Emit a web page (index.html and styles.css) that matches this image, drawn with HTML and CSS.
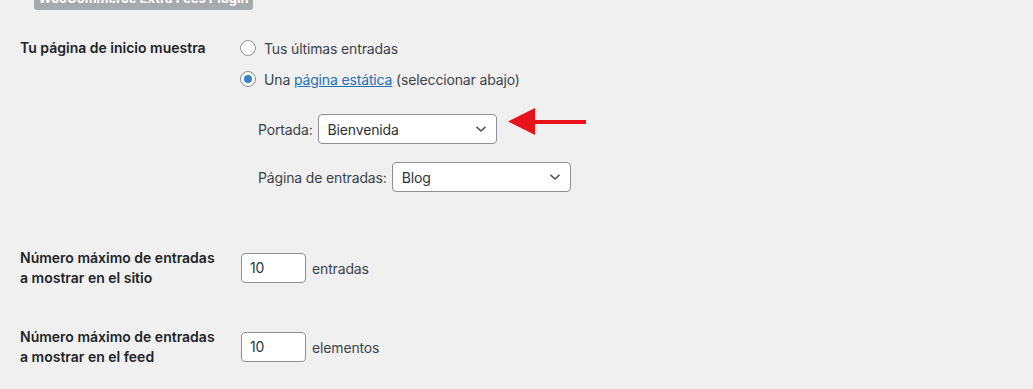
FILE: index.html
```html
<!DOCTYPE html>
<html lang="es">
<head>
    <meta charset="UTF-8">
    <title>Ajustes de lectura</title>
    <link rel="stylesheet" href="styles.css">
</head>
<body>
<div class="wrap">
    <div class="top-button">WooCommerce Extra Fees Plugin</div>

    <div class="row first">
        <div class="row-label">Tu página de inicio muestra</div>
        <div class="row-field">
            <label class="choice"><span class="radio"></span>Tus últimas entradas</label>
            <label class="choice second"><span class="radio checked"></span>Una&nbsp;<a href="#">página estática</a>&nbsp;(seleccionar abajo)</label>

            <div class="sub-row portada">
                <span>Portada:</span>
                <div class="select">
                    Bienvenida
                    <svg class="chevron" width="12" height="8" viewBox="0 0 12 8"><path d="M1.5 1.8 L6 6 L10.5 1.8" fill="none" stroke="#50575e" stroke-width="1.6"/></svg>
                </div>
                <svg class="arrow" width="80" height="30" viewBox="0 0 80 30"><polygon points="0,13.5 27,0 27,27" fill="#e8131a"/><rect x="26" y="12" width="52" height="4" fill="#e8131a"/></svg>
            </div>

            <div class="sub-row entradas">
                <span>Página de entradas:</span>
                <div class="select">
                    Blog
                    <svg class="chevron" width="12" height="8" viewBox="0 0 12 8"><path d="M1.5 1.8 L6 6 L10.5 1.8" fill="none" stroke="#50575e" stroke-width="1.6"/></svg>
                </div>
            </div>
        </div>
    </div>

    <div class="row second-row">
        <div class="row-label">Número máximo de entradas<br>a mostrar en el sitio</div>
        <div class="row-field inline">
            <div class="number">10</div>
            <span class="unit">entradas</span>
        </div>
    </div>

    <div class="row third-row">
        <div class="row-label">Número máximo de entradas<br>a mostrar en el feed</div>
        <div class="row-field inline">
            <div class="number">10</div>
            <span class="unit">elementos</span>
        </div>
    </div>
</div>
</body>
</html>
```

FILE: styles.css
```css
body {
    margin: 0;
    background-color: #f0f0f1;
    font-family: Inter, "Noto Sans", sans-serif;
    font-size: 14px;
    color: #3c434a;
}

.wrap {
    padding-left: 20px;
}

.top-button {
    margin-left: 14px;
    margin-top: -20px;
    width: 219px;
    height: 30px;
    box-sizing: border-box;
    padding-top: 9px;
    line-height: 18px;
    background-color: #a7aaad;
    color: #fff;
    font-weight: 700;
    font-size: 13px;
    text-align: center;
    border-radius: 0 0 3px 3px;
    overflow: hidden;
}

.row {
    display: flex;
}

.row-label {
    width: 220px;
    flex-shrink: 0;
    font-weight: 600;
    color: #1d2327;
    line-height: 20px;
}

.row-field {
    letter-spacing: -0.15px;
}

.row.first {
    margin-top: 28px;
}

.row.second-row {
    margin-top: 56px;
}

.row.third-row {
    margin-top: 39px;
}

.choice {
    display: flex;
    align-items: center;
    height: 20px;
}

.choice.second {
    margin-top: 11px;
}

.choice a {
    color: #2271b1;
}

.radio {
    width: 14px;
    height: 14px;
    border: 1px solid #8c8f94;
    border-radius: 50%;
    background-color: #fff;
    margin-right: 8px;
    position: relative;
}

.radio.checked::after {
    content: "";
    position: absolute;
    left: 3px;
    top: 3px;
    width: 8px;
    height: 8px;
    border-radius: 50%;
    background-color: #3582c4;
}

.sub-row {
    display: flex;
    align-items: center;
    margin-left: 18px;
    position: relative;
}

.sub-row span {
    margin-right: 5px;
}

.sub-row.portada {
    margin-top: 25px;
}

.sub-row.entradas {
    margin-top: 18px;
}

.select {
    box-sizing: border-box;
    width: 179px;
    height: 30px;
    border: 1px solid #8c8f94;
    border-radius: 4px;
    background-color: #fff;
    color: #2c3338;
    padding-left: 9px;
    display: flex;
    align-items: center;
    justify-content: space-between;
    padding-right: 9px;
}

.arrow {
    position: absolute;
    left: 250px;
    top: -6px;
}

.inline {
    display: flex;
    align-items: center;
    margin-top: 5px;
    margin-left: 1px;
    align-self: flex-start;
}

.number {
    box-sizing: border-box;
    width: 65px;
    height: 30px;
    border: 1px solid #8c8f94;
    border-radius: 4px;
    background-color: #fff;
    color: #2c3338;
    padding-left: 8px;
    line-height: 28px;
}

.unit {
    margin-left: 6px;
}
```
